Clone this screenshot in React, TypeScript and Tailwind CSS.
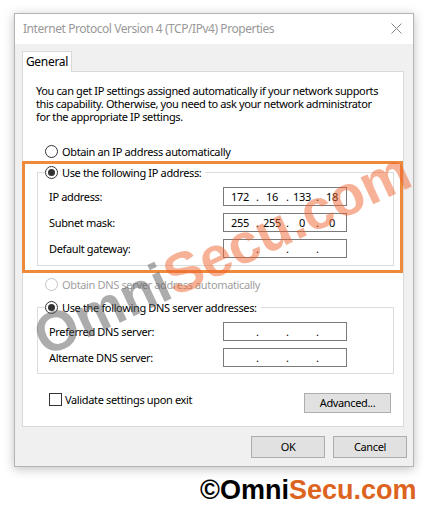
import React from "react";

const ui = { fontFamily: '"Noto Sans", "Liberation Sans", sans-serif' };

function Radio({ checked = false, disabled = false }: { checked?: boolean; disabled?: boolean }) {
  return (
    <span
      className={
        "flex h-[13px] w-[13px] shrink-0 items-center justify-center rounded-full border bg-white " +
        (disabled ? "border-[#c4c4c4]" : "border-[#333333]")
      }
    >
      {checked && <span className="h-[7px] w-[7px] rounded-full bg-[#333333]" />}
    </span>
  );
}

function IpBox({ parts }: { parts: string[] }) {
  const widths = ["w-[32px]", "w-[28px]", "w-[28px]", "w-[28px]"];
  return (
    <div className="flex h-[19px] w-[124px] items-center border border-[#7a7a7a] bg-white text-black">
      {parts.map((p, i) => (
        <React.Fragment key={i}>
          <span className={widths[i] + " text-center leading-[17px]"}>{p}</span>
          {i < 3 && <span className="w-[2px] text-center leading-[17px]">.</span>}
        </React.Fragment>
      ))}
    </div>
  );
}

function FieldRow({ label, parts }: { label: string; parts: string[] }) {
  return (
    <div className="flex h-[19px] items-center">
      <span className="w-[174px] leading-[13px]">{label}</span>
      <IpBox parts={parts} />
    </div>
  );
}

export default function App() {
  const empty = ["", "", "", ""];
  const intro = [
    "You can get IP settings assigned automatically if your network supports",
    "this capability. Otherwise, you need to ask your network administrator",
    "for the appropriate IP settings.",
  ];

  return (
    <div className="relative h-[507px] w-[424px] overflow-hidden bg-white text-[11px] tracking-[-0.35px] text-black" style={ui}>
      <div className="pl-[14px] pt-[13px]">
        {/* dialog window */}
        <div className="flex h-[454px] w-[400px] flex-col border border-[#b4b4b4] bg-[#f0f0f0] shadow-[0_2px_10px_rgba(0,0,0,0.25)]">
          <div className="flex h-[30px] items-center justify-between bg-white pl-[8px] pr-[11px]">
            <span className="text-[12px] tracking-[-0.45px] text-[#999999]">Internet Protocol Version 4 (TCP/IPv4) Properties</span>
            <svg width="11" height="11" viewBox="0 0 11 11" className="mb-[2px]">
              <path d="M0.5 0.5 L10.5 10.5 M10.5 0.5 L0.5 10.5" stroke="#8a8a8a" strokeWidth="1" />
            </svg>
          </div>

          <div className="flex flex-1 flex-col pl-[7px] pr-[6px] pt-[7px]">
            {/* tab */}
            <div className="relative z-10 -mb-px flex h-[21px] w-[50px] items-center justify-center border border-b-0 border-[#d9d9d9] bg-white text-[12px] tracking-[-0.3px]">
              General
            </div>

            {/* tab panel */}
            <div className="h-[356px] w-[382px] border border-[#d9d9d9] bg-white pt-[12px]">
              <div className="pl-[13px] leading-[13px] tracking-[-0.38px]">
                {intro.map(line => (
                  <div key={line} className="whitespace-nowrap">{line}</div>
                ))}
              </div>

              <label className="ml-[22px] mt-[22px] flex h-[13px] items-center gap-[4px] leading-[13px]">
                <Radio />
                Obtain an IP address automatically
              </label>

              <fieldset className="ml-[14px] mt-[8px] w-[357px] border border-[#dcdcdc] pb-[7px] pl-[7px]">
                <legend className="pr-[4px]">
                  <span className="flex h-[13px] items-center gap-[4px] leading-[13px]">
                    <Radio checked />
                    Use the following IP address:
                  </span>
                </legend>
                <div className="ml-[4px] mt-[8px] flex flex-col gap-[7px]">
                  <FieldRow label="IP address:" parts={["172", "16", "133", "18"]} />
                  <FieldRow label="Subnet mask:" parts={["255", "255", "0", "0"]} />
                  <FieldRow label="Default gateway:" parts={empty} />
                </div>
              </fieldset>

              <label className="ml-[22px] mt-[12px] flex h-[13px] items-center gap-[4px] leading-[13px] text-[#a0a0a0]">
                <Radio disabled />
                Obtain DNS server address automatically
              </label>

              <fieldset className="ml-[14px] mt-[10px] w-[357px] border border-[#dcdcdc] pb-[6px] pl-[7px]">
                <legend className="pr-[4px]">
                  <span className="flex h-[13px] items-center gap-[4px] leading-[13px]">
                    <Radio checked />
                    Use the following DNS server addresses:
                  </span>
                </legend>
                <div className="ml-[4px] mt-[8px] flex flex-col gap-[7px]">
                  <FieldRow label="Preferred DNS server:" parts={empty} />
                  <FieldRow label="Alternate DNS server:" parts={empty} />
                </div>
              </fieldset>

              <div className="ml-[26px] mr-[12px] mt-[19px] flex items-start justify-between">
                <label className="flex h-[13px] items-center gap-[3px] leading-[13px]">
                  <span className="h-[13px] w-[13px] border border-[#333333] bg-white" />
                  Validate settings upon exit
                </label>
                <button className="h-[20px] w-[87px] border border-[#adadad] bg-[#e1e1e1] leading-[18px]">
                  Advanced...
                </button>
              </div>
            </div>

            <div className="mt-[9px] flex justify-end gap-[8px]">
              <button className="h-[22px] w-[74px] border border-[#adadad] bg-[#e1e1e1]">OK</button>
              <button className="h-[22px] w-[74px] border border-[#adadad] bg-[#e1e1e1]">Cancel</button>
            </div>
          </div>
        </div>
      </div>

      {/* orange highlight */}
      <div className="absolute left-[22px] top-[161px] h-[112px] w-[381px] border-[3px] border-[#ee8a3c]" />

      {/* diagonal watermark */}
      <div
        className="pointer-events-none absolute left-[222px] top-[254px] -translate-x-1/2 -translate-y-1/2 -rotate-[25deg] whitespace-nowrap text-[56px] font-bold leading-none tracking-normal"
        style={{ fontFamily: '"Liberation Sans", sans-serif' }}
      >
        <span className="text-[rgba(90,90,90,0.5)]">Omni</span>
        <span className="text-[rgba(238,100,45,0.5)]">Secu.com</span>
      </div>

      {/* footer watermark */}
      <div
        className="absolute left-[200px] top-[474px] whitespace-nowrap text-[27px] font-bold leading-[32px] tracking-normal"
        style={{ fontFamily: '"Liberation Sans", sans-serif' }}
      >
        <span className="text-black">©Omni</span>
        <span className="text-[#dc6420]">Secu.com</span>
      </div>
    </div>
  );
}
